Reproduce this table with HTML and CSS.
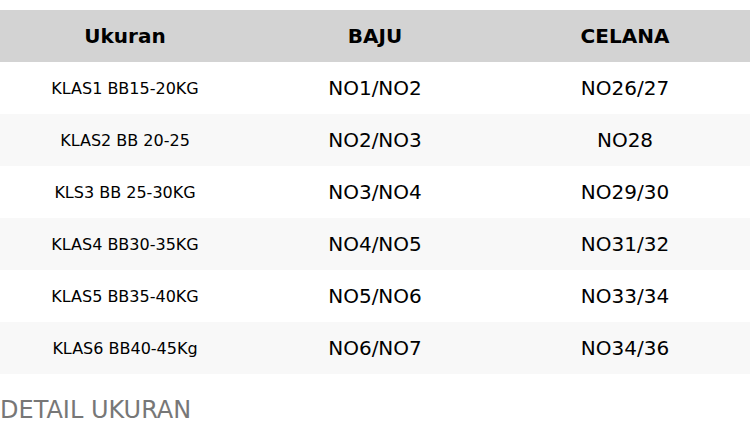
FILE: index.html
```html
<!DOCTYPE html>
<html>
<head>
<meta charset="utf-8">
<link rel="stylesheet" href="styles.css">
</head>
<body>
<table class="size-table">
  <thead>
    <tr><th>Ukuran</th><th>BAJU</th><th>CELANA</th></tr>
  </thead>
  <tbody>
    <tr><td class="klas">KLAS1 BB15-20KG</td><td>NO1/NO2</td><td>NO26/27</td></tr>
    <tr><td class="klas">KLAS2 BB 20-25</td><td>NO2/NO3</td><td>NO28</td></tr>
    <tr><td class="klas">KLS3 BB 25-30KG</td><td>NO3/NO4</td><td>NO29/30</td></tr>
    <tr><td class="klas">KLAS4 BB30-35KG</td><td>NO4/NO5</td><td>NO31/32</td></tr>
    <tr><td class="klas">KLAS5 BB35-40KG</td><td>NO5/NO6</td><td>NO33/34</td></tr>
    <tr><td class="klas">KLAS6 BB40-45Kg</td><td>NO6/NO7</td><td>NO34/36</td></tr>
  </tbody>
</table>
<h2 class="detail">DETAIL UKURAN</h2>
</body>
</html>
```
FILE: styles.css
```css
html, body {
  margin: 0;
  padding: 0;
  background: #fff;
  font-family: "DejaVu Sans", sans-serif;
  color: #000;
}
.size-table {
  margin-top: 10px;
  width: 750px;
  border-collapse: collapse;
  table-layout: fixed;
}
.size-table th {
  background: #d3d3d3;
  height: 52px;
  padding: 0;
  font-size: 20px;
  font-weight: bold;
  text-align: center;
}
.size-table td {
  height: 52px;
  padding: 0;
  font-size: 20px;
  text-align: center;
}
.size-table td.klas {
  font-size: 16px;
}
.size-table tbody tr:nth-child(even) td {
  background: #f8f8f8;
}
.detail {
  margin: 22px 0 0 0;
  font-size: 24px;
  font-weight: normal;
  color: #777;
  line-height: 28px;
}
```
